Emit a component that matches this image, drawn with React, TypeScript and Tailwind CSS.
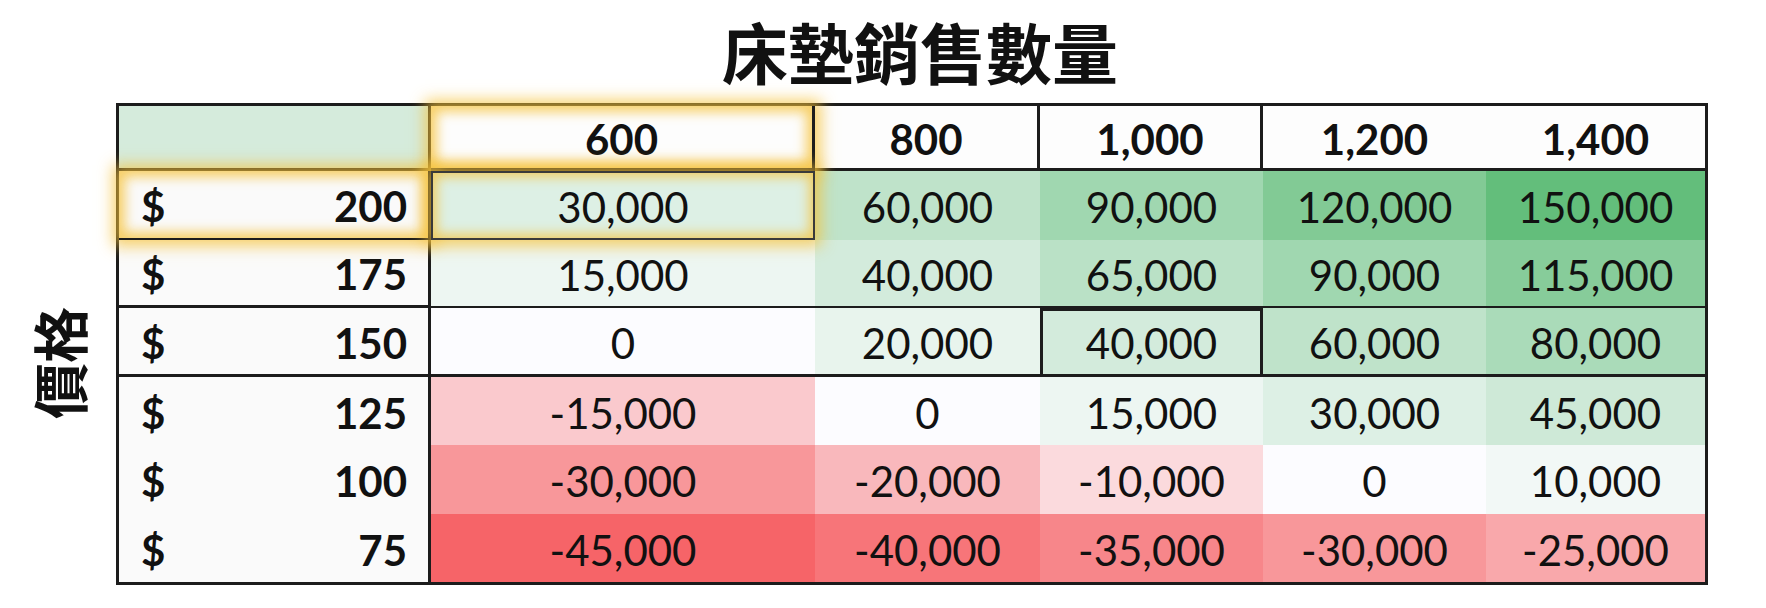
import React from "react";

const quantities = ["600", "800", "1,000", "1,200", "1,400"];

interface PriceRow {
  price: string;
  values: number[];
  labelBorder: string;
  cellBorder: string;
}

const rows: PriceRow[] = [
  { price: "200", values: [30000, 60000, 90000, 120000, 150000], labelBorder: "border-b-2", cellBorder: "" },
  { price: "175", values: [15000, 40000, 65000, 90000, 115000], labelBorder: "border-b-[3px]", cellBorder: "border-b-2" },
  { price: "150", values: [0, 20000, 40000, 60000, 80000], labelBorder: "border-b-[3px]", cellBorder: "border-b-[3px]" },
  { price: "125", values: [-15000, 0, 15000, 30000, 45000], labelBorder: "", cellBorder: "" },
  { price: "100", values: [-30000, -20000, -10000, 0, 10000], labelBorder: "", cellBorder: "" },
  { price: "75", values: [-45000, -40000, -35000, -30000, -25000], labelBorder: "", cellBorder: "" },
];

const headerBorders = ["border-r-[3px]", "border-r-[3px]", "border-r-[3px]", "", ""];

const glow =
  "relative z-10 shadow-[0_0_14px_6px_rgba(246,194,56,0.75),inset_0_0_12px_6px_rgba(246,194,56,0.75)]";

// excel-style 3 colour scale, midpoint at 0
function heat(v: number) {
  const white = [252, 252, 255];
  const green = [99, 190, 123];
  const red = [246, 100, 104];
  const target = v >= 0 ? green : red;
  const t = v >= 0 ? v / 150000 : v / -45000;
  const c = white.map((w, i) => Math.round(w + (target[i] - w) * t));
  return `rgb(${c[0]}, ${c[1]}, ${c[2]})`;
}

function fmt(v: number) {
  return v.toLocaleString("en-US");
}

export default function App() {
  return (
    <main className="w-[1766px] h-[608px] bg-white text-[#111] overflow-hidden">
      <h1
        className="pl-[722px] pt-[10px] h-[103px] text-[66px] font-bold leading-[80px]"
        style={{ fontFamily: '"Noto Sans CJK TC", sans-serif' }}
      >
        床墊銷售數量
      </h1>

      <div className="flex">
        <div className="w-[116px] flex items-center justify-center pt-[38px]">
          <span
            className="-rotate-90 whitespace-nowrap text-[56px] font-bold leading-none"
            style={{ fontFamily: '"Noto Sans CJK TC", sans-serif' }}
          >
            價格
          </span>
        </div>

        <div
          className="grid grid-cols-[312px_384px_225px_223px_223px_219px] grid-rows-[65px_repeat(6,68.5px)] border-[3px] border-[#1c1c1c] text-[42px] leading-none"
          style={{ fontFamily: "Lato, sans-serif" }}
        >
          <div className="bg-[#d5ebdc] border-r-[3px] border-b-[3px] border-[#1c1c1c]" />
          {quantities.map((q, i) => (
            <div
              key={q}
              className={`flex items-center justify-center pt-[3px] font-bold bg-[#fdfdfd] border-b-[3px] border-[#1c1c1c] ${headerBorders[i]} ${i === 0 ? glow : ""}`}
            >
              {q}
            </div>
          ))}

          {rows.map((row, r) => (
            <React.Fragment key={row.price}>
              <div
                className={`flex items-center justify-between pl-[22px] pr-[21px] pt-[4px] font-bold bg-[#fafafa] border-r-[3px] border-[#1c1c1c] ${row.labelBorder} ${r === 0 ? glow : ""}`}
              >
                <span>$</span>
                <span>{row.price}</span>
              </div>
              {row.values.map((v, c) => {
                let extra = "";
                if (r === 0 && c === 0) extra = `${glow} outline-2 -outline-offset-2 outline-[#3a3a3a]`;
                if (r === 2 && c === 2) extra = "relative outline-[3px] -outline-offset-[3px] outline-[#1c1c1c]";
                return (
                  <div
                    key={c}
                    className={`flex items-center justify-center pt-[4px] border-[#1c1c1c] ${row.cellBorder} ${extra}`}
                    style={{ backgroundColor: heat(v) }}
                  >
                    {fmt(v)}
                  </div>
                );
              })}
            </React.Fragment>
          ))}
        </div>
      </div>
    </main>
  );
}
